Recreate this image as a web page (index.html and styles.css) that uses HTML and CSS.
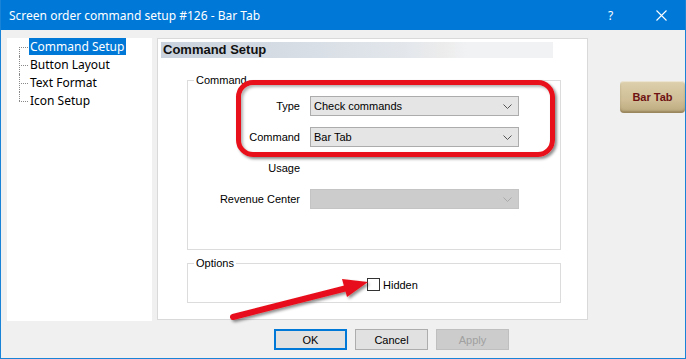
FILE: index.html
```html
<!DOCTYPE html>
<html lang="en">
<head>
  <meta charset="UTF-8">
  <title>Screen order command setup</title>
  <link rel="stylesheet" href="styles.css">
</head>
<body>

  <div class="window">
    <!-- Title bar -->
    <div class="titlebar">
      <span class="title">Screen order command setup #126 - Bar Tab</span>
      <span class="help">?</span>
      <svg class="close" width="11" height="11" viewBox="0 0 11 11">
        <path d="M0.5 0.5 L10.5 10.5 M10.5 0.5 L0.5 10.5" stroke="#fff" stroke-width="1.1" fill="none"/>
      </svg>
    </div>

    <div class="client">
      <div class="main">
        <!-- Tree -->
        <div class="tree">
          <ul class="tree-list">
            <li class="selected"><span>Command Setup</span></li>
            <li><span>Button Layout</span></li>
            <li><span>Text Format</span></li>
            <li class="last"><span>Icon Setup</span></li>
          </ul>
        </div>

        <!-- Page -->
        <div class="page">
          <div class="page-header">Command Setup</div>

          <fieldset class="group group-command">
            <legend>Command</legend>
            <div class="form-grid">
              <label>Type</label>
              <div class="combo"><span>Check commands</span><svg class="chev" width="9" height="5" viewBox="0 0 9 5"><path d="M0.5 0.5 L4.5 4.5 L8.5 0.5" stroke="#555" fill="none"/></svg></div>

              <label>Command</label>
              <div class="combo"><span>Bar Tab</span><svg class="chev" width="9" height="5" viewBox="0 0 9 5"><path d="M0.5 0.5 L4.5 4.5 L8.5 0.5" stroke="#555" fill="none"/></svg></div>

              <label>Usage</label>
              <div></div>

              <label>Revenue Center</label>
              <div class="combo disabled"><span></span><svg class="chev" width="9" height="5" viewBox="0 0 9 5"><path d="M0.5 0.5 L4.5 4.5 L8.5 0.5" stroke="#aaa" fill="none"/></svg></div>
            </div>
          </fieldset>

          <fieldset class="group group-options">
            <legend>Options</legend>
            <label class="check"><span class="box"></span>Hidden</label>
          </fieldset>
        </div>

        <!-- Preview -->
        <div class="preview">
          <div class="bar-tab">Bar Tab</div>
        </div>
      </div>

      <!-- Dialog buttons -->
      <div class="buttons">
        <button class="btn default">OK</button>
        <button class="btn">Cancel</button>
        <button class="btn" disabled>Apply</button>
      </div>
    </div>

    <!-- Annotations -->
    <div class="callout"></div>
    <svg class="arrow" width="686" height="359" viewBox="0 0 686 359">
      <defs>
        <filter id="shadow" x="-20%" y="-20%" width="140%" height="140%">
          <feDropShadow dx="2" dy="2" stdDeviation="1.5" flood-color="#000" flood-opacity="0.45"/>
        </filter>
      </defs>
      <g filter="url(#shadow)">
        <line x1="233" y1="317" x2="347" y2="288" stroke="#e8101a" stroke-width="6" stroke-linecap="round"/>
        <polygon points="368,282 347,297 342,279" fill="#e8101a"/>
      </g>
    </svg>
  </div>

</body>
</html>
```

FILE: styles.css
```css
body {
  margin: 0;
  padding: 0;
  background-color: #f0f0f0;
  font-family: 'Liberation Sans', Arial, sans-serif;
  font-size: 11px;
  color: #000;
}

.window {
  position: relative;
  width: 686px;
  height: 359px;
  box-sizing: border-box;
  border: 1px solid #1883d7;
  border-top: none;
  background-color: #f0f0f0;
  overflow: hidden;
}

/* Title bar */
.titlebar {
  height: 30px;
  margin: 0 -1px;
  background-color: #0078d7;
  color: white;
  display: flex;
  align-items: center;
  padding: 0 0 0 9px;
  font-family: 'Noto Sans', sans-serif;
  font-size: 12px;
}

.title {
  flex: 1;
}

.help {
  width: 12px;
  margin-right: 36px;
  font-size: 12px;
}

.close {
  margin-right: 19px;
}

/* Client area */
.client {
  padding: 8px 0 0 6px;
}

.main {
  display: flex;
  gap: 5px;
}

.tree {
  width: 145px;
  height: 283px;
  background-color: white;
  font-family: 'Noto Sans', sans-serif;
  font-size: 12px;
}

.tree-list {
  list-style: none;
  margin: 0;
  padding: 0 0 0 12px;
  position: relative;
}

.tree-list li {
  height: 18px;
  line-height: 17px;
  padding-left: 10px;
  position: relative;
}

.tree-list li::before {
  content: "";
  position: absolute;
  left: 0;
  top: 9px;
  width: 9px;
  border-top: 1px dotted #888;
}

.tree-list li::after {
  content: "";
  position: absolute;
  left: 0;
  top: 0;
  height: 18px;
  border-left: 1px dotted #888;
}

.tree-list li:first-child::after {
  top: 9px;
  height: 9px;
}

.tree-list li.last::after {
  height: 9px;
}

.tree-list li span {
  padding: 0 2px 0 1px;
  display: inline-block;
  height: 17px;
}

.tree-list li.selected span {
  background-color: #0078d7;
  color: white;
}

/* Page */
.page {
  width: 431px;
  height: 282px;
  background-color: white;
  border: 1px solid #d9d9d9;
  padding: 3px;
  box-sizing: border-box;
}

.page-header {
  width: 392px;
  height: 16px;
  line-height: 16px;
  padding-left: 2px;
  box-sizing: border-box;
  font-family: 'Liberation Sans', Arial, sans-serif;
  font-weight: bold;
  font-size: 13px;
  color: #111;
  background: linear-gradient(to right, #c9d2dd 0%, #d9dfe6 40%, #e3e7ec 62%, #ececec 72%, #f1f2f4 78%, #f1f2f4 100%);
}

.group {
  margin: 16px 0 0 26px;
  width: 374px;
  box-sizing: border-box;
  border: 1px solid #dcdcdc;
  padding: 0;
}

.group legend {
  margin-left: 6px;
  padding: 0 2px;
  line-height: 13px;
  color: #000;
}

.group-command {
  height: 176px;
  padding-top: 9px;
}

.form-grid {
  display: grid;
  grid-template-columns: 112px 209px;
  grid-auto-rows: 20px;
  column-gap: 10px;
  row-gap: 11px;
}

.form-grid label {
  text-align: right;
  line-height: 20px;
}

.combo {
  display: flex;
  align-items: center;
  justify-content: space-between;
  background-color: #e5e5e5;
  border: 1px solid #acacac;
  box-sizing: border-box;
  padding: 0 6px 0 3px;
}

.combo.disabled {
  background-color: #cccccc;
  border-color: #c4c4c4;
}

.group-options {
  margin-top: 7px;
  height: 46px;
}

.check {
  display: flex;
  align-items: center;
  gap: 3px;
  margin: 8px 0 0 179px;
}

.check .box {
  width: 11px;
  height: 11px;
  border: 1px solid #333;
  background-color: white;
}

/* Preview */
.preview {
  flex: 1;
  padding: 43px 0 0 27px;
}

.bar-tab {
  width: 65px;
  height: 32px;
  line-height: 32px;
  text-align: center;
  border-radius: 4px;
  background: linear-gradient(to bottom, #ddd0ac, #cfbe96 60%, #bba87e);
  box-shadow: inset 0 -2px 2px rgba(90, 70, 30, 0.35), inset 0 1px 1px rgba(255, 255, 255, 0.5);
  color: #6e1212;
  font-family: 'Liberation Sans', Arial, sans-serif;
  font-weight: bold;
  font-size: 11px;
}

/* Dialog buttons */
.buttons {
  display: flex;
  gap: 8px;
  padding: 8px 0 0 267px;
}

.btn {
  width: 73px;
  height: 21px;
  background-color: #e1e1e1;
  border: 1px solid #adadad;
  font-family: 'Liberation Sans', Arial, sans-serif;
  font-size: 11px;
  color: #000;
  padding: 0;
}

.btn.default {
  border: 2px solid #0078d7;
}

.btn:disabled {
  background-color: #cccccc;
  border-color: #bfbfbf;
  color: #a0a0a0;
}

/* Annotations */
.callout {
  position: absolute;
  left: 235px;
  top: 80px;
  width: 319px;
  height: 77px;
  box-sizing: border-box;
  border: 5px solid #e8101a;
  border-radius: 17px;
  box-shadow: 2px 2px 3px rgba(0, 0, 0, 0.45), inset 2px 2px 3px rgba(0, 0, 0, 0.3);
}

.arrow {
  position: absolute;
  left: -1px;
  top: 0;
  pointer-events: none;
}
```
